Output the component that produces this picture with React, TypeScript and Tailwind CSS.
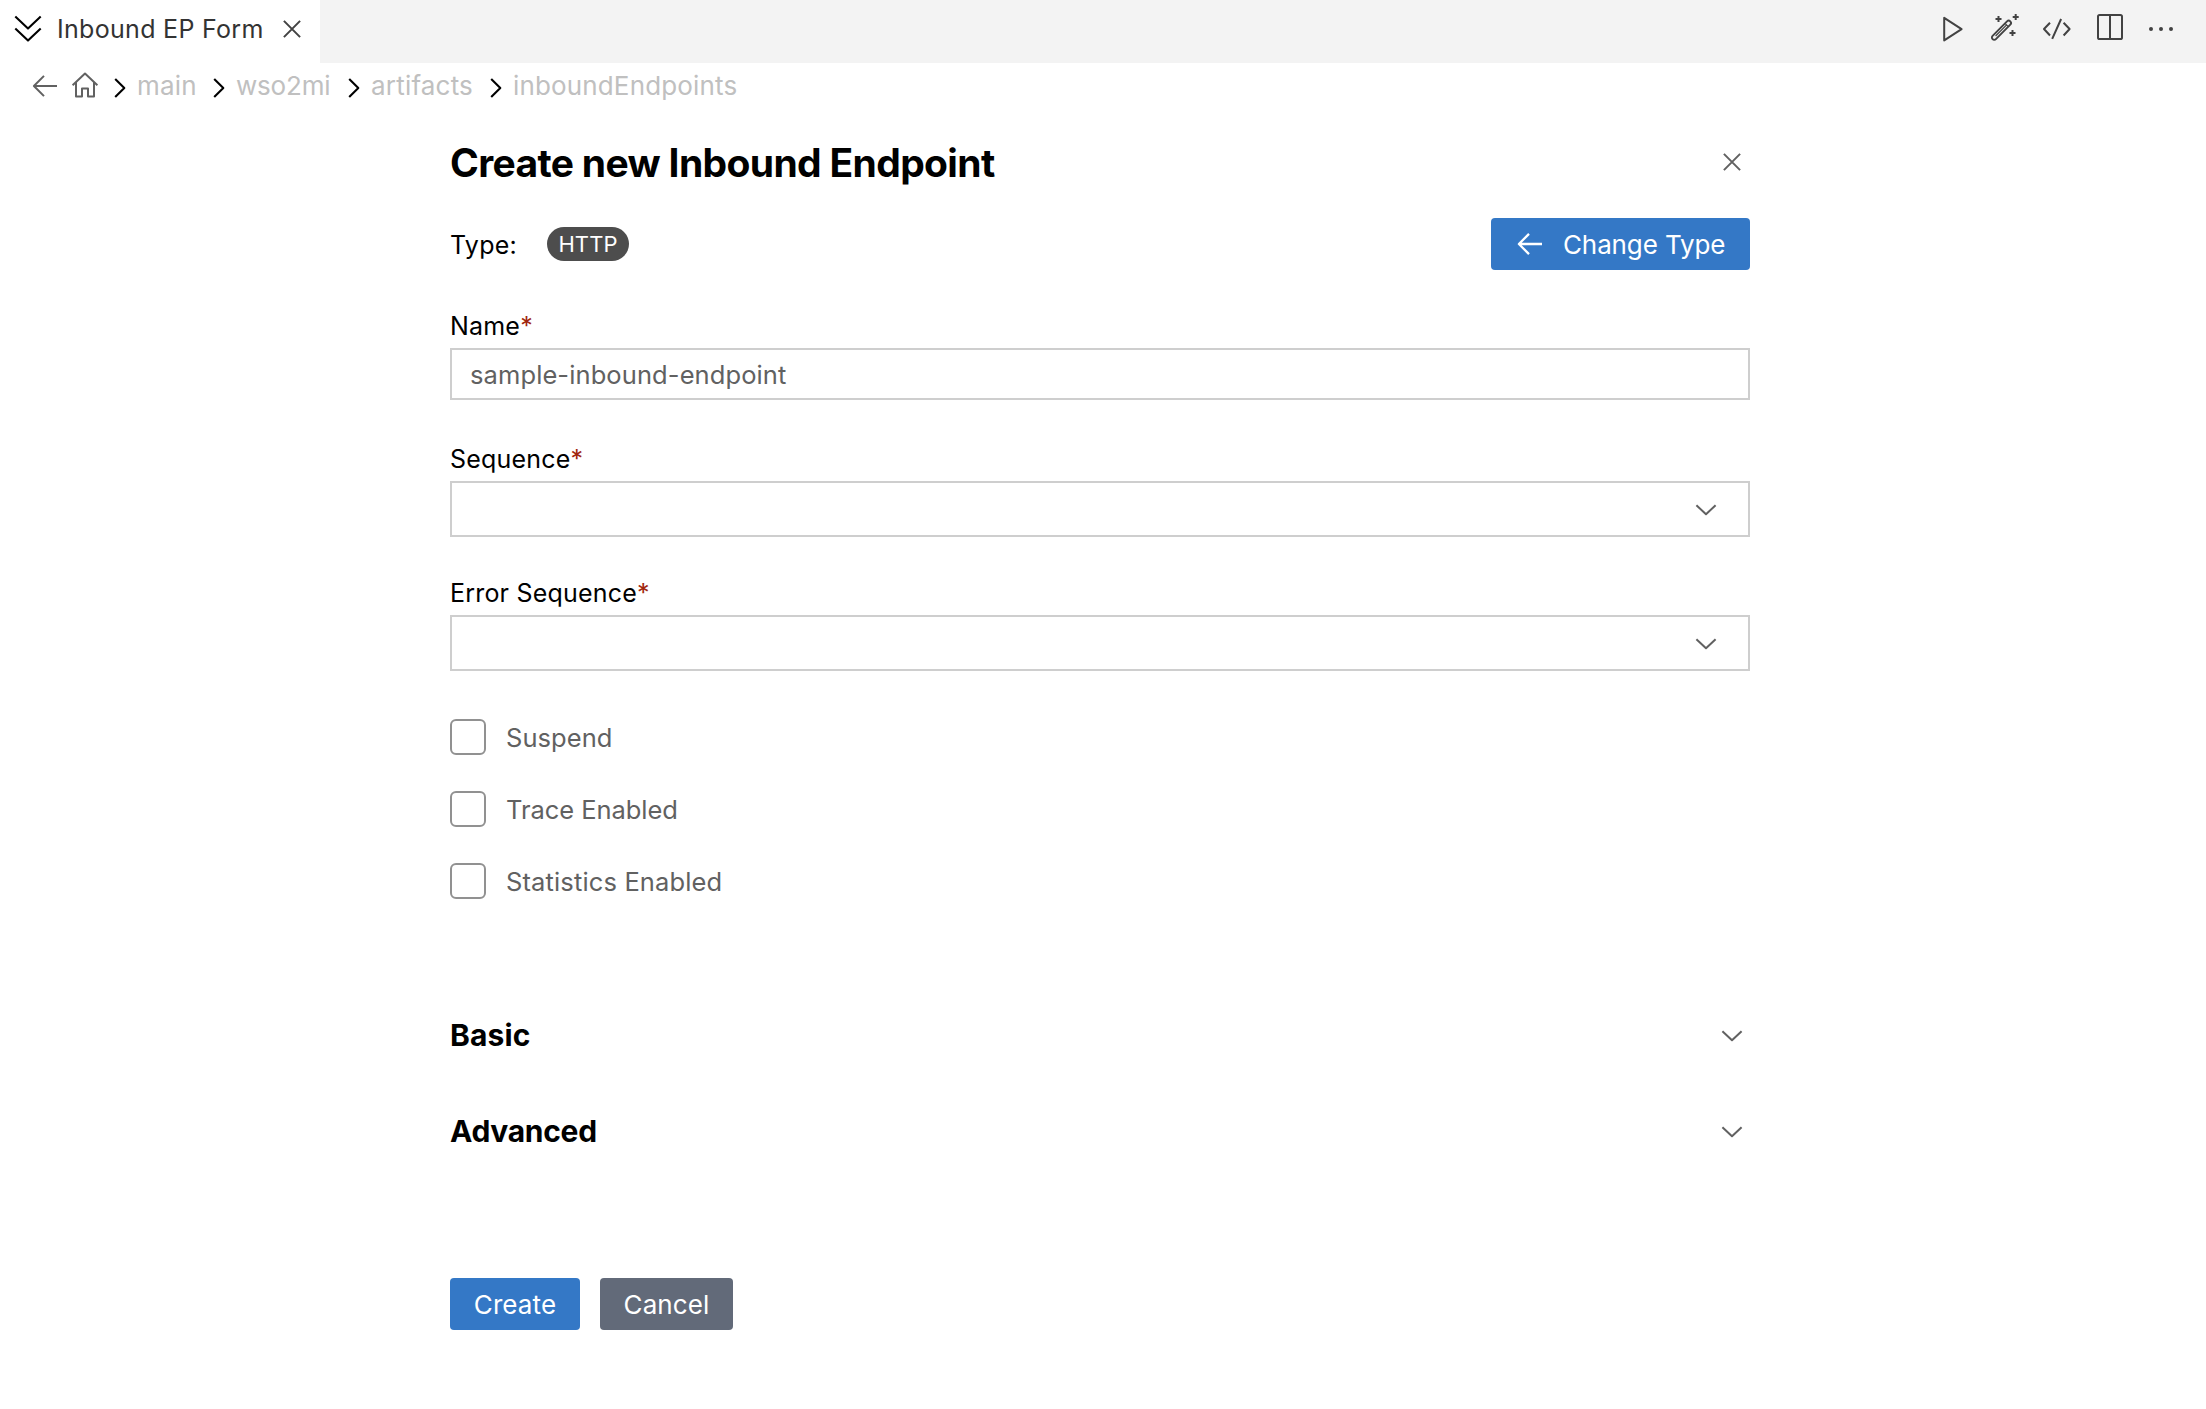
import React from "react";

type IconProps = { d: string; box: string; className: string; sw?: number };

/* One user unit of every icon's box is one pixel. */
function Icon({ d, box, className, sw = 2 }: IconProps) {
  return (
    <svg
      viewBox={box}
      className={`shrink-0 ${className}`}
      fill="none"
      stroke="currentColor"
      strokeWidth={sw}
      strokeLinecap="butt"
      strokeLinejoin="round"
    >
      <path d={d} />
    </svg>
  );
}

const BackArrow = ({ className = "", sw = 2 }: { className?: string; sw?: number }) => (
  <Icon box="0 0 26 22" className={`h-[22px] w-[26px] ${className}`} sw={sw} d="M12 .9 L1.9 11 L12 21.1 M1.9 11 H25" />
);

const ChevronDown = () => (
  <Icon box="0 0 22 12" className="mt-[2px] h-[12px] w-[22px] text-[#616161]" d="M1.4 1.2 L11 10.3 L20.6 1.2" />
);

const Cross = ({ className = "" }: { className?: string }) => (
  <Icon box="0 0 18 18" className={`size-[18px] ${className}`} d="M.9 .9 L17.1 17.1 M17.1 .9 L.9 17.1" />
);

function TabBar() {
  return (
    <header className="flex h-[63px] items-start justify-between bg-[#f3f3f3]">
      <div className="flex h-full w-[320px] items-center bg-white pb-[6px]">
        <Icon
          box="0 0 28 28"
          className="ml-[14px] size-[28px] text-black"
          d="M1.3 1.6 L14 13.6 L26.7 1.6 M1.3 13.6 L14 25.6 L26.7 13.6"
          sw={2.1}
        />
        <span className="ml-[15px] w-[211px] text-[25px] leading-8 tracking-[0.3px] text-[#333333]">Inbound EP Form</span>
        <Cross className="ml-[15px] text-[#424242]" />
      </div>
      <div className="flex h-[57px] items-center text-[#424242]">
        <Icon box="0 0 22 28" className="mr-[26px] h-[28px] w-[22px]" d="M2.2 2.8 V25.4 L19.6 14.1 Z" />
        <svg viewBox="0 0 30 30" className="mt-[1px] mr-[22px] size-[30px] shrink-0" fill="none" stroke="currentColor" strokeWidth="2">
          <path d="M2.6 21.8 L17 7.4 A2.3 2.3 0 0 1 20.3 10.7 L5.9 25.1 A2.3 2.3 0 0 1 2.6 21.8 Z" strokeWidth="1.9" />
          <path d="M15 9.4 L18.3 12.7 M5.6 22 L16.4 11.2" strokeWidth="1.2" />
          <path d="M8.5 2 V8 M5.5 5 H11.5 M25.7 0 V6 M22.7 3 H28.7 M22.5 16 V22 M19.5 19 H25.5" />
        </svg>
        <Icon box="0 0 30 24" className="mr-[25px] h-[24px] w-[30px]" d="M8 5.7 L2 12 L8 18.5 M21.6 5.7 L27.6 12 L21.6 18.5 M19.1 2 L10.2 21.8" />
        <svg viewBox="0 0 26 26" className="mt-[-3px] mr-[25px] size-[26px] shrink-0" fill="none" stroke="currentColor" strokeWidth="2">
          <rect x="1" y="1" width="24" height="24" rx="1.6" />
          <path d="M13 1 V25" />
        </svg>
        <svg viewBox="0 0 26 6" className="mr-[32px] h-[6px] w-[26px] shrink-0" fill="currentColor">
          <circle cx="3" cy="3" r="2" />
          <circle cx="13" cy="3" r="2" />
          <circle cx="23" cy="3" r="2" />
        </svg>
      </div>
    </header>
  );
}

function Crumb({ label, className }: { label: string; className: string }) {
  return (
    <div className={`flex items-center ${className}`}>
      <Icon box="0 0 12 20" className="mt-[4px] h-[20px] w-[12px] text-black" sw={2.1} d="M1.2 .9 L10.3 10 L1.2 19.1" />
      <span className="ml-[11px] leading-8">{label}</span>
    </div>
  );
}

function Breadcrumbs() {
  return (
    <nav className="flex h-[46px] items-center pl-[32px] text-[26px] text-[#c0c0c0]">
      <BackArrow className="text-[#616161]" />
      <Icon
        box="0 0 28 28"
        className="mt-[-2px] ml-[13px] size-[28px] text-[#616161]"
        d="M1.6 14.3 L14 2.6 L26.4 14.3 M5 11.5 V25.4 H11 V17.4 H17 V25.4 H23 V11.5"
      />
      <Crumb label="main" className="ml-[15px] w-[99px] tracking-[0.2px]" />
      <Crumb label="wso2mi" className="w-[135px] tracking-[-0.2px]" />
      <Crumb label="artifacts" className="w-[142px] tracking-[0.2px]" />
      <Crumb label="inboundEndpoints" className="tracking-[0.15px]" />
    </nav>
  );
}

function FieldLabel({ text }: { text: string }) {
  return (
    <label className="block h-8 text-[25px] leading-8 tracking-[0.2px] text-black">
      {text}
      <span className="text-[#a1260d]">*</span>
    </label>
  );
}

function SelectField({ label, className }: { label: string; className: string }) {
  return (
    <div className={className}>
      <FieldLabel text={label} />
      <div className="mt-[6px] flex h-[56px] items-center justify-end border-2 border-[#cecece] bg-white pr-[31px]">
        <ChevronDown />
      </div>
    </div>
  );
}

function Check({ label, className }: { label: string; className: string }) {
  return (
    <div className="flex h-[36px] items-center">
      <span className="size-[36px] shrink-0 rounded-[6px] border-2 border-[#919191] bg-white" />
      <span className={`mt-[2px] ml-[20px] text-[25.5px] leading-8 text-[#616161] ${className}`}>{label}</span>
    </div>
  );
}

function Section({ title, className }: { title: string; className: string }) {
  return (
    <div className="flex h-[40px] items-center justify-between pr-[7px]">
      <h3 className={`text-[30px] leading-10 font-bold ${className}`}>{title}</h3>
      <ChevronDown />
    </div>
  );
}

export default function App() {
  return (
    <div className="h-[1409px] w-[2206px] overflow-hidden bg-white font-['Inter',sans-serif] text-black">
      <TabBar />
      <Breadcrumbs />
      <main className="ml-[450px] w-[1300px] pt-[30px]">
        <div className="flex h-[48px] items-center justify-between pr-[9px]">
          <h2 className="text-[39px] leading-[48px] font-bold tracking-[-0.65px]">Create new Inbound Endpoint</h2>
          <Cross className="mt-[-2px] text-[#616161]" />
        </div>

        <div className="mt-[31px] flex h-[52px] items-center">
          <span className="mt-[2px] w-[97px] text-[25px] leading-8 tracking-[0.25px]">Type:</span>
          <span className="flex h-[34px] w-[82px] items-center justify-center rounded-full bg-[#4d4d4d] text-[22px] tracking-[0.1px] text-white">
            HTTP
          </span>
          <button className="ml-auto flex h-[52px] w-[259px] items-center rounded-[4px] bg-[#3478c6] text-[26px] text-white">
            <BackArrow className="ml-[26px]" sw={2.3} />
            <span className="mt-[2px] ml-[20px] leading-8 tracking-[-0.12px]">Change Type</span>
          </button>
        </div>

        <div className="mt-[40px]">
          <FieldLabel text="Name" />
          <div className="mt-[6px] flex h-[52px] items-center border-2 border-[#cecece] bg-white pl-[18px]">
            <span className="mt-[2px] text-[25.5px] leading-8 tracking-[0.1px] text-[#616161]">sample-inbound-endpoint</span>
          </div>
        </div>
        <SelectField label="Sequence" className="mt-[43px]" />
        <SelectField label="Error Sequence" className="mt-[40px]" />

        <div className="mt-[48px] flex flex-col gap-[36px]">
          <Check label="Suspend" className="tracking-[0.05px]" />
          <Check label="Trace Enabled" className="tracking-[-0.05px]" />
          <Check label="Statistics Enabled" className="tracking-[0.14px]" />
        </div>

        <div className="mt-[116px] flex flex-col gap-[56px]">
          <Section title="Basic" className="tracking-[0.15px]" />
          <Section title="Advanced" className="tracking-[-0.3px]" />
        </div>

        <div className="mt-[127px] flex gap-[20px] text-[26px] tracking-[0.1px] text-white">
          <button className="h-[52px] w-[130px] rounded-[4px] bg-[#3478c6] pt-[2px] leading-8">Create</button>
          <button className="h-[52px] w-[133px] rounded-[4px] bg-[#626a79] pt-[2px] leading-8">Cancel</button>
        </div>
      </main>
    </div>
  );
}
